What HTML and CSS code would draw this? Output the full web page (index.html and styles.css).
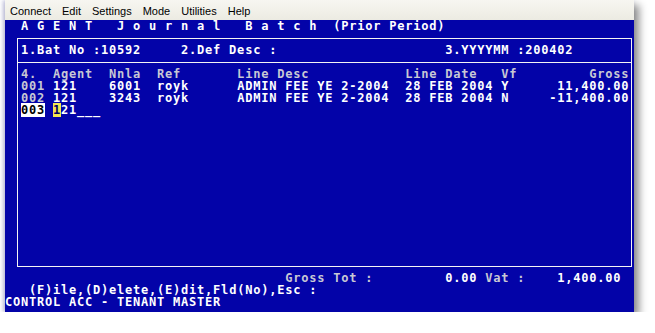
FILE: index.html
```
<!DOCTYPE html>
<html lang="en">
<head>
    <meta charset="UTF-8">
    <title>AGENT Journal Batch</title>
    <link rel="stylesheet" href="styles.css">
</head>
<body>
    <div class="window">
        <div class="menubar">
            <span>Connect</span>
            <span>Edit</span>
            <span>Settings</span>
            <span>Mode</span>
            <span>Utilities</span>
            <span>Help</span>
        </div>
        <div class="term">
            <div class="row">  A G E N T   J o u r n a l   B a t c h  (Prior Period)</div>
            <div class="box">
                <div class="row">1.Bat No :10592     2.Def Desc :                     3.YYYYMM :200402</div>
                <div class="sep"></div>
                <div class="entries">
                    <div class="row dim">4.  Agent  Nnla  Ref       Line Desc            Line Date   Vf         Gross</div>
                    <div class="row"><span class="dim">001</span> 121    6001  royk      ADMIN FEE YE 2-2004  28 FEB 2004 Y      11,400.00</div>
                    <div class="row"><span class="dim">002</span> 121    3243  royk      ADMIN FEE YE 2-2004  28 FEB 2004 N     -11,400.00</div>
                    <div class="row"><span class="sel">003</span> <span class="cursor">1</span>21___</div>
                </div>
            </div>
            <div class="row"><span class="dim">                                   Gross Tot :</span>         0.00<span class="dim"> Vat :</span>    1,400.00</div>
            <div class="row">   (F)ile,(D)elete,(E)dit,Fld(No),Esc :</div>
            <div class="row">CONTROL ACC - TENANT MASTER</div>
        </div>
    </div>
</body>
</html>
```
FILE: styles.css
```
body {
    margin: 0;
    background-color: #ffffff;
}
.window {
    margin-left: 5px;
    width: 629px;
    box-shadow: 5px 5px 8px rgba(0, 0, 0, 0.45), -2px 0 4px rgba(80, 80, 160, 0.35);
}
.menubar {
    height: 18px;
    padding: 2px 0 0 5px;
    line-height: 18px;
    background: linear-gradient(#f7f6f1, #ecebe2);
    font-family: "Liberation Sans", Arial, sans-serif;
    font-size: 11px;
    color: #000;
    display: flex;
    gap: 11px;
}
.term {
    height: 292px;
    overflow: hidden;
    background-color: #0303a8;
    color: #ffffff;
    font-family: "DejaVu Sans Mono", monospace;
    font-size: 12px;
    font-weight: bold;
    letter-spacing: 0.78px;
}
.row {
    height: 11px;
    padding-top: 1px;
    line-height: 11px;
    white-space: pre;
}
.box {
    margin: 6px 0 5px 12px;
    width: 615px;
    box-sizing: border-box;
    border: 1px solid #f4f4f4;
    padding: 5px 0 6px 3px;
}
.sep {
    height: 1px;
    margin: 6px 0 5px -3px;
    background-color: #f4f4f4;
}
.entries {
    height: 192px;
}
.dim {
    color: #c8c8d4;
}
.sel {
    background-color: #ffffff;
    color: #000000;
}
.cursor {
    background-color: #f4e850;
    color: #000060;
}
```
